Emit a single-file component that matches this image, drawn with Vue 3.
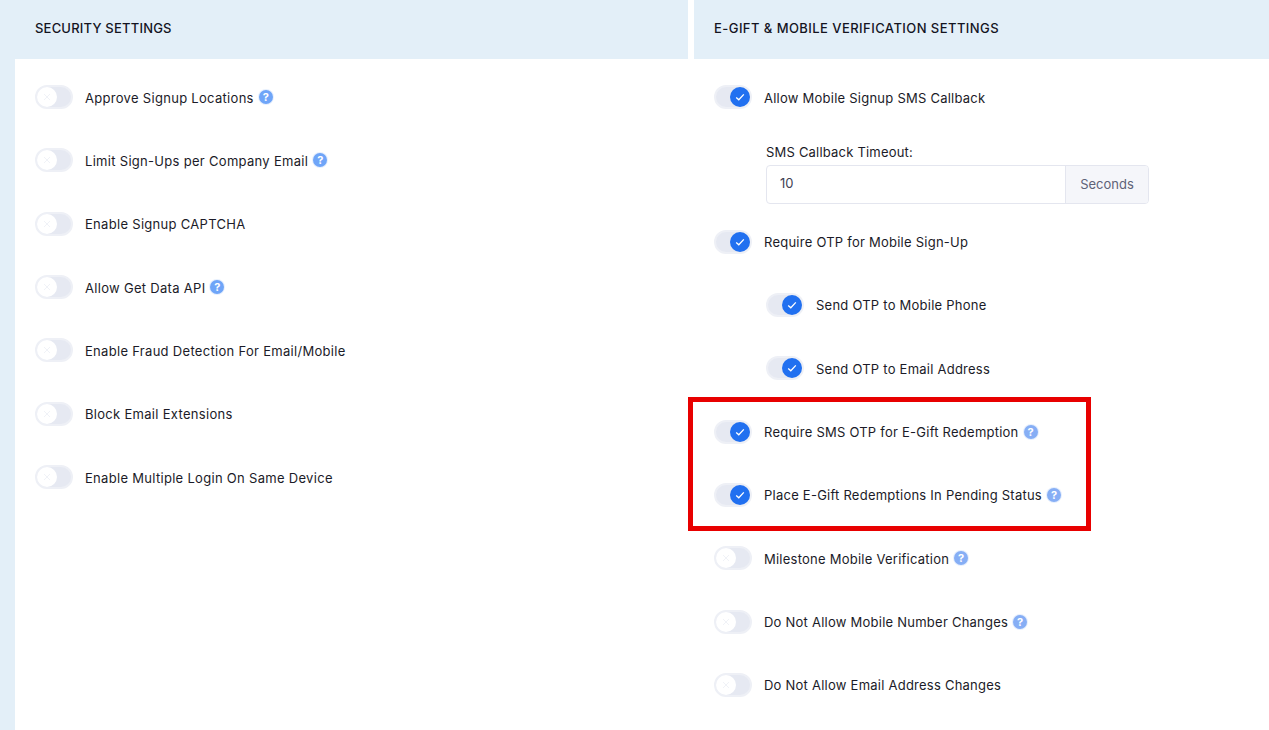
<script setup>
const left = [
  { label: 'Approve Signup Locations', help: true },
  { label: 'Limit Sign-Ups per Company Email', help: true },
  { label: 'Enable Signup CAPTCHA' },
  { label: 'Allow Get Data API', help: true },
  { label: 'Enable Fraud Detection For Email/Mobile' },
  { label: 'Block Email Extensions' },
  { label: 'Enable Multiple Login On Same Device' }
]
const rightTop = { label: 'Allow Mobile Signup SMS Callback', on: true }
const right = [
  { label: 'Require OTP for Mobile Sign-Up', on: true },
  { label: 'Send OTP to Mobile Phone', on: true, sub: true },
  { label: 'Send OTP to Email Address', on: true, sub: true },
  { label: 'Require SMS OTP for E-Gift Redemption', on: true, help: true, pale: true },
  { label: 'Place E-Gift Redemptions In Pending Status', on: true, help: true, pale: true },
  { label: 'Milestone Mobile Verification', help: true, pale: true },
  { label: 'Do Not Allow Mobile Number Changes', help: true, pale: true },
  { label: 'Do Not Allow Email Address Changes' }
]
</script>

<template>
  <div class="page">
    <section class="panel panel-left">
      <h2 class="head">Security Settings</h2>
      <div class="body">
        <div v-for="r in left" :key="r.label" class="row">
          <span class="toggle">
            <span class="knob">
              <svg viewBox="0 0 10 10" width="10" height="10"><path d="M2 2l6 6M8 2l-6 6" stroke="#f0f2f7" stroke-width="1" fill="none" /></svg>
            </span>
          </span>
          <span class="label">{{ r.label }}</span>
          <span v-if="r.help" class="help">?</span>
        </div>
      </div>
    </section>

    <section class="panel panel-right">
      <h2 class="head">E-Gift &amp; Mobile Verification Settings</h2>
      <div class="body">
        <div class="row row-tight">
          <span class="toggle on">
            <span class="knob">
              <svg viewBox="0 0 12 12" width="12" height="12"><path d="M2.2 6.4l2.6 2.4 5-5.4" stroke="#fff" stroke-width="1.3" fill="none" /></svg>
            </span>
          </span>
          <span class="label">{{ rightTop.label }}</span>
        </div>

        <div class="field">
          <label class="field-label">SMS Callback Timeout:</label>
          <div class="group">
            <div class="input">10</div>
            <div class="addon">Seconds</div>
          </div>
        </div>

        <div v-for="r in right" :key="r.label" class="row lower" :class="{ sub: r.sub }">
          <span class="toggle" :class="{ on: r.on }">
            <span class="knob">
              <svg v-if="r.on" viewBox="0 0 12 12" width="12" height="12"><path d="M2.2 6.4l2.6 2.4 5-5.4" stroke="#fff" stroke-width="1.3" fill="none" /></svg>
              <svg v-else viewBox="0 0 10 10" width="10" height="10"><path d="M2 2l6 6M8 2l-6 6" stroke="#f0f2f7" stroke-width="1" fill="none" /></svg>
            </span>
          </span>
          <span class="label">{{ r.label }}</span>
          <span v-if="r.help" class="help" :class="{ pale: r.pale }">?</span>
        </div>
      </div>
      <div class="highlight"></div>
    </section>
  </div>
</template>

<style>
html, body { margin: 0; background: #fff; overflow: hidden; }
</style>

<style scoped>
.page {
  display: grid;
  grid-template-columns: 673px 1fr;
  column-gap: 6px;
  height: 730px;
  padding-left: 15px;
  background: linear-gradient(to right, #e3eff8 15px, #fff 15px);
  font-family: Inter, "Noto Sans", sans-serif;
  color: #1b1b28;
  overflow: hidden;
}
.panel { position: relative; background: #fff; min-width: 0; }
.head {
  margin: 0;
  box-sizing: border-box;
  height: 59px;
  padding: 0 0 4px 20px;
  display: flex;
  align-items: center;
  background: #e3eff8;
  font-size: 13px;
  font-weight: 500;
  letter-spacing: 0.2px;
  text-transform: uppercase;
  color: #14141f;
}
.panel-right .head { letter-spacing: 0.44px; }
.body { padding: 26px 20px 0; }
.row {
  display: flex;
  align-items: center;
  height: 24px;
  margin-bottom: 39.33px;
}
.row-tight { margin-bottom: 33px; }
.sub { margin-left: 52px; }
.toggle {
  position: relative;
  flex: none;
  box-sizing: border-box;
  width: 38px;
  height: 24px;
  margin-right: 12px;
  border-radius: 12px;
  background: #e6e9f2;
  border: 2px solid #eef0f6;
}
.knob {
  position: absolute;
  left: 0;
  top: 0;
  width: 20px;
  height: 20px;
  border-radius: 50%;
  background: #fff;
  display: flex;
  align-items: center;
  justify-content: center;
}
.toggle.on .knob { left: 14px; background: #2170f0; }
.label { padding-top: 1.4px; font-size: 13px; line-height: 20px; letter-spacing: 0.3px; white-space: nowrap; }
.panel-right .label { letter-spacing: 0.24px; }
.lower .label { padding-top: 0.6px; }
.help {
  flex: none;
  width: 14px;
  height: 14px;
  margin-left: 5px;
  border-radius: 50%;
  background: #6fa5f8;
  box-shadow: 0 0 0 1px #e6effd;
  color: #fff;
  font-size: 11px;
  font-weight: 700;
  line-height: 14px;
  text-align: center;
}
.help.pale { background: #86aef5; }
.field { margin: 0 0 25.67px 52px; width: 383px; }
.field-label { display: block; height: 20px; margin-bottom: 3px; font-size: 13px; line-height: 20px; letter-spacing: 0.2px; }
.group {
  display: flex;
  height: 39px;
  box-sizing: border-box;
  border: 1px solid #e4e6ef;
  border-radius: 4px;
  overflow: hidden;
}
.input {
  flex: 1;
  padding-left: 13px;
  font-size: 13px;
  line-height: 35px;
  color: #3f4254;
}
.addon {
  box-sizing: border-box;
  width: 83px;
  border-left: 1px solid #e4e6ef;
  background: #f5f6fa;
  font-size: 13px;
  line-height: 37px;
  text-align: center;
  color: #5e6278;
}
.highlight {
  position: absolute;
  left: -6px;
  top: 397px;
  width: 403px;
  height: 134px;
  box-sizing: border-box;
  border: 5px solid #e80000;
  pointer-events: none;
}
</style>
